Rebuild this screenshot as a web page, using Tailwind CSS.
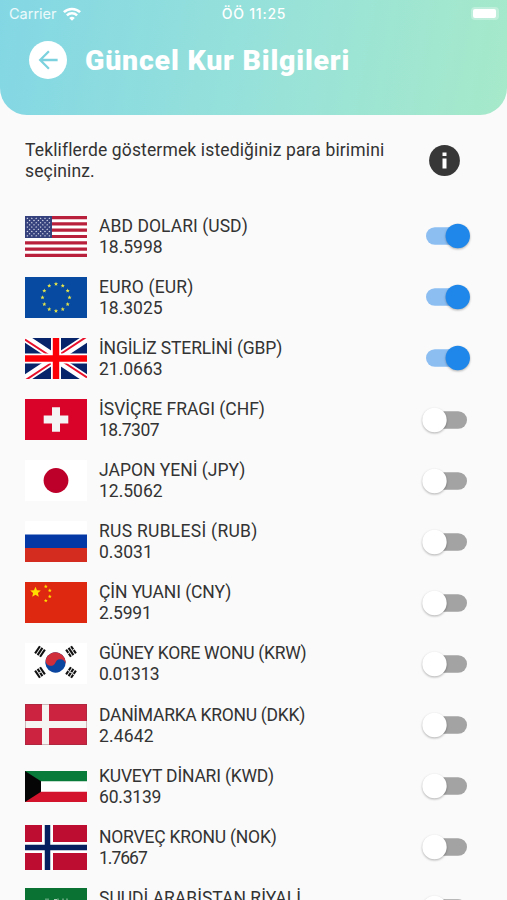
<!DOCTYPE html>
<html lang="tr">

<head>
	<meta charset="UTF-8">
	<meta name="viewport" content="width=device-width, initial-scale=1.0">
	<title>Güncel Kur Bilgileri</title>
	<script src="https://cdn.jsdelivr.net/npm/@tailwindcss/browser@4"></script>
</head>

<body class="h-[900px] overflow-hidden bg-[#fafafa] font-[Roboto,sans-serif] text-[#333]">

	<!-- Header -->
	<header class="h-[115px] rounded-b-[27px] bg-linear-[100deg,#83d7e4,#96e1da_50%,#a6e9ca] text-white">
		<div class="grid h-[27px] grid-cols-3 items-center pl-[9px] pr-2">
			<div class="flex items-center gap-1.5 font-[Inter,sans-serif] text-[14.5px] text-white/85">
				<span>Carrier</span>
				<svg class="h-[14px] w-[18px]" viewBox="0 0 18 14" fill="none" stroke="white" stroke-width="2.5">
					<path d="M.9 5.2C5.4.8 12.6.8 17.1 5.2M3.9 8.3C6.7 5.5 11.3 5.5 14.1 8.3" />
					<path d="M9 13.7 6.2 10.9Q9 8.5 11.8 10.9Z" fill="white" stroke="none" />
				</svg>
			</div>
			<span class="text-center font-[Inter,sans-serif] text-[14px] font-medium tracking-[0.75px]">ÖÖ 11:25</span>
			<div class="flex justify-end">
				<div class="h-[13px] w-[28px] rounded-[4px] bg-white/30 p-[2px]">
					<div class="h-[9px] w-[23px] rounded-[2px] bg-white"></div>
				</div>
			</div>
		</div>
		<div class="flex h-[66px] items-center pl-[29px]">
			<button class="flex size-[38px] items-center justify-center rounded-full bg-white">
				<svg class="size-[22px]" viewBox="0 0 24 24" fill="none" stroke="#7bd2de" stroke-width="2.5">
					<path d="M22.5 12H3.5M13 2.5 3.5 12 13 21.5" />
				</svg>
			</button>
			<h1 class="ml-[18px] whitespace-nowrap pt-0.5 text-[28.5px] font-black tracking-[0.8px]">Güncel Kur Bilgileri</h1>
		</div>
	</header>

	<!-- Description -->
	<div class="flex h-[90.7px] items-center justify-between pl-[25px] pr-[47px]">
		<p class="whitespace-nowrap pt-[1.5px] text-[17.5px] leading-[21px] tracking-[0.14px]">Tekliflerde göstermek istediğiniz para birimini<br>seçininz.</p>
		<svg class="size-[31px]" viewBox="0 0 31 31">
			<circle cx="15.5" cy="15.5" r="15.4" fill="#373737" />
			<path d="M13.5 7.5h4V11h-4zM13.5 13.5h4v10h-4z" fill="white" />
		</svg>
	</div>

	<!-- Currency rows -->
	<main id="currencies"></main>

	<template id="row-template">
		<div class="flex h-[61.1px] items-center pl-[25px]">
			<div class="currency-flag flex w-[62px] justify-center"></div>
			<div class="ml-3 flex-1 whitespace-nowrap pt-[1.2px] text-[17.5px] leading-[21px]">
				<div><span class="currency-name"></span></div>
				<div><span class="currency-rate"></span></div>
			</div>
			<div class="currency-toggle mr-[36px]"></div>
		</div>
	</template>

	<script>
		const star = (x, y, r) => {
			const points = [];
			for (let i = 0; i < 10; i++) {
				const a = Math.PI * i / 5 - Math.PI / 2;
				const d = i % 2 ? r * 0.45 : r;
				points.push(`${x + d * Math.cos(a)},${y + d * Math.sin(a)}`);
			}
			return `<polygon points="${points.join(' ')}"/>`;
		};

		const ring = Array.from({ length: 12 }, (_, i) => {
			const a = Math.PI * i / 6;
			return star(31 + 13.5 * Math.sin(a), 20.5 - 13.5 * Math.cos(a), 2.2);
		}).join('');

		const stripes = Array.from({ length: 7 }, (_, i) => `<path d="M0 ${i * 6.31}h62v3.15H0z" fill="#b9203b"/>`).join('');

		const dots = Array.from({ length: 9 }, (_, r) =>
			Array.from({ length: r % 2 ? 5 : 6 }, (_, c) => star(2.4 + (r % 2) * 2.2 + c * 4.4, 2.3 + r * 2.2, 1.05)).join('')
		).join('');

		// three bars, each optionally split in the middle
		const trigram = (x, y, angle, split) => `<g transform="translate(${x} ${y}) rotate(${angle})">` +
			[-3, 0, 3].map((dx, i) => `<path d="M${dx} -4.3V4.3" stroke="#111" stroke-width="2.1"/>` +
				(split[i] ? `<path d="M${dx - 1.1} 0h2.2" stroke="white" stroke-width="1"/>` : '')).join('') + '</g>';

		const flags = {
			us: `<rect width="62" height="41" fill="white"/>${stripes}<rect width="27" height="22" fill="#35417c"/><g fill="#dfe2ef">${dots}</g>`,
			eu: `<rect width="62" height="41" fill="#064aa2"/><g fill="#e5e44a">${ring}</g>`,
			gb: `<rect width="62" height="41" fill="#07246b"/><path d="M0 0 62 41M62 0 0 41" stroke="white" stroke-width="8"/><path d="M0 1.5 29 20.5M62 39.5 33 20.5M62-1.5 31 19M0 42.5 31 22" stroke="#e8112b" stroke-width="2"/><path d="M31 0v41M0 20.5h62" stroke="white" stroke-width="10"/><path d="M31 0v41M0 20.5h62" stroke="#fb0007" stroke-width="6.4"/>`,
			ch: `<rect width="62" height="41" fill="#d90229"/><path d="M31 8.2v24.6M18.7 20.5h24.6" stroke="#f4f4f4" stroke-width="8"/>`,
			jp: `<rect width="62" height="41" fill="white"/><circle cx="31" cy="20.5" r="12.4" fill="#bd0029"/>`,
			ru: `<rect width="62" height="41" fill="white"/><path d="M0 13.5h62V27H0z" fill="#0338a5"/><path d="M0 27h62v14H0z" fill="#d52c20"/>`,
			cn: `<rect width="62" height="41" fill="#de2910"/><g fill="#ffdf00">${star(10.5, 10.3, 5.6)}${star(20.8, 4.5, 2)}${star(24.8, 8.5, 2)}${star(24.8, 14.5, 2)}${star(20.8, 18.7, 2)}</g>`,
			kr: `<rect width="62" height="41" fill="white"/><g transform="translate(30.5 19.5) rotate(20)"><circle r="10.2" fill="#0b47a0"/><path d="M-10.2 0A10.2 10.2 0 0 1 10.2 0A5.1 5.1 0 0 0 0 0A5.1 5.1 0 0 1 -10.2 0" fill="#cf2e3a"/></g>${trigram(15, 8.5, 34, [0, 0, 0])}${trigram(46, 8.5, -34, [1, 0, 1])}${trigram(15, 29.5, -34, [0, 1, 0])}${trigram(46, 29.5, 34, [1, 1, 1])}`,
			dk: `<rect width="62" height="41" fill="#cc2340"/><path d="M20.5 0v41M0 20.5h62" stroke="#f6f3f3" stroke-width="7"/><rect x=".5" y=".5" width="61" height="40" fill="none" stroke="#70303c" stroke-opacity=".3"/>`,
			kw: `<rect width="62" height="31" fill="white"/><path d="M0 0h62v10.3H0z" fill="#087b3a"/><path d="M0 20.7h62V31H0z" fill="#d2132b"/><path d="M0 0 16 10.3v10.4L0 31z" fill="#050505"/>`,
			no: `<rect width="62" height="45" fill="#bd0d31"/><path d="M22.5 0v45M0 22.5h62" stroke="white" stroke-width="11"/><path d="M22.5 0v45M0 22.5h62" stroke="#06205f" stroke-width="5.5"/>`,
			sa: `<rect width="62" height="41" fill="#0a7334"/><path d="M16 12.5h4m1-2v3m2-3v3h5m1-2h3m1-1v3h4m1-3v3h3m1-3v3h3" fill="none" stroke="#cfe4d6" stroke-width=".8"/>`
		};

		const toggles = {
			on: `<svg class="h-[30px] w-[50px] overflow-visible" viewBox="0 0 50 30"><rect x="5" y="6.2" width="41" height="17.6" rx="8.8" fill="#8dbef2"/><circle class="drop-shadow-[0_1px_1px_rgba(0,0,0,0.3)]" cx="36.8" cy="15" r="12.2" fill="#1e87e9"/></svg>`,
			off: `<svg class="h-[30px] w-[50px] overflow-visible" viewBox="0 0 50 30"><rect x="5" y="6.2" width="41" height="17.6" rx="8.8" fill="#a3a3a3"/><circle class="drop-shadow-[0_1px_1px_rgba(0,0,0,0.3)]" cx="13.5" cy="15" r="12.2" fill="white"/></svg>`
		};

		// spacing: letter-spacing in px for the name and the rate
		const currencies = [
			{ flag: 'us', height: 41, name: 'ABD DOLARI (USD)', rate: '18.5998', on: true, spacing: [0.06, 0] },
			{ flag: 'eu', height: 41, name: 'EURO (EUR)', rate: '18.3025', on: true, spacing: [0.2, 0] },
			{ flag: 'gb', height: 41, name: 'İNGİLİZ STERLİNİ (GBP)', rate: '21.0663', on: true, spacing: [-0.14, 0] },
			{ flag: 'ch', height: 41, name: 'İSVİÇRE FRAGI (CHF)', rate: '18.7307', on: false, spacing: [0, -0.5] },
			{ flag: 'jp', height: 41, name: 'JAPON YENİ (JPY)', rate: '12.5062', on: false, spacing: [0, 0] },
			{ flag: 'ru', height: 41, name: 'RUS RUBLESİ (RUB)', rate: '0.3031', on: false, spacing: [0.28, 0] },
			{ flag: 'cn', height: 41, name: 'ÇİN YUANI (CNY)', rate: '2.5991', on: false, spacing: [-0.07, -0.2] },
			{ flag: 'kr', height: 41, name: 'GÜNEY KORE WONU (KRW)', rate: '0.01313', on: false, spacing: [-0.3, -0.5] },
			{ flag: 'dk', height: 41, name: 'DANİMARKA KRONU (DKK)', rate: '2.4642', on: false, spacing: [-0.28, 0.15] },
			{ flag: 'kw', height: 31, name: 'KUVEYT DİNARI (KWD)', rate: '60.3139', on: false, spacing: [-0.2, -0.2] },
			{ flag: 'no', height: 45, name: 'NORVEÇ KRONU (NOK)', rate: '1.7667', on: false, spacing: [-0.22, -1] },
			{ flag: 'sa', height: 41, name: 'SUUDİ ARABİSTAN RİYALİ', rate: '4.9518', on: false, spacing: [0, 0] }
		];

		const container = document.getElementById('currencies');
		const template = document.getElementById('row-template');

		currencies.forEach(cur => {
			const clone = template.content.cloneNode(true);
			const name = clone.querySelector('.currency-name');
			const rate = clone.querySelector('.currency-rate');
			name.textContent = cur.name;
			name.style.letterSpacing = `${cur.spacing[0]}px`;
			rate.textContent = cur.rate;
			rate.style.letterSpacing = `${cur.spacing[1]}px`;
			clone.querySelector('.currency-flag').innerHTML = `<svg class="w-[62px] overflow-hidden" viewBox="0 0 62 ${cur.height}">${flags[cur.flag]}</svg>`;
			clone.querySelector('.currency-toggle').innerHTML = cur.on ? toggles.on : toggles.off;
			container.appendChild(clone);
		});
	</script>
</body>

</html>
